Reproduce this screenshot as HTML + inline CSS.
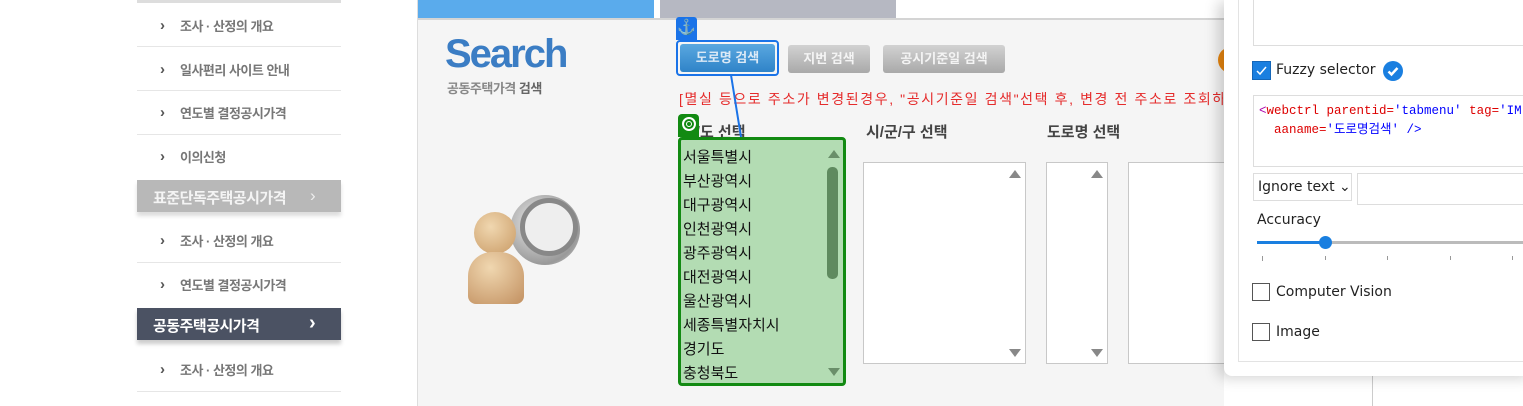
<!DOCTYPE html>
<html><head><meta charset="utf-8"><style>
*{margin:0;padding:0;box-sizing:border-box}
body{width:1523px;height:406px;overflow:hidden;background:#fff;position:relative;font-family:"Liberation Sans","Noto Sans CJK KR",sans-serif}
.a{position:absolute}
.nav{color:#777;font-size:13px;font-weight:bold;letter-spacing:-0.5px}
.sep{height:1px;background:#e6e6e6;left:137px;width:204px}
.chev{color:#555;font-size:15px;font-weight:bold;line-height:15px}
.btn{border-radius:3px;font-size:13px;font-weight:bold;text-align:center;line-height:28px;height:28px;color:#fff}
.lb{background:#fff;border:1px solid #c8c8c8}
.tri{width:0;height:0;border-left:6px solid transparent;border-right:6px solid transparent}
.up{border-bottom:8px solid #888}
.dn{border-top:8px solid #888}
.ui{font-family:"DejaVu Sans","Liberation Sans",sans-serif;font-size:14px;color:#222}
.cb{width:18px;height:18px;border:1.5px solid #555;background:#fff}
</style></head><body>
<div class="a" style="left:137px;top:0;width:204px;height:3px;background:#ddd"></div>
<div class="a chev" style="left:160px;top:18px">›</div><div class="a nav" style="left:180px;top:16px">조사 · 산정의 개요</div>
<div class="a sep" style="top:46px"></div>
<div class="a chev" style="left:160px;top:62px">›</div><div class="a nav" style="left:180px;top:60px">일사편리 사이트 안내</div>
<div class="a sep" style="top:90px"></div>
<div class="a chev" style="left:160px;top:105px">›</div><div class="a nav" style="left:180px;top:103px">연도별 결정공시가격</div>
<div class="a sep" style="top:134px"></div>
<div class="a chev" style="left:160px;top:149px">›</div><div class="a nav" style="left:180px;top:147px">이의신청</div>
<div class="a" style="left:137px;top:180px;width:204px;height:32px;background:#b8b8b8;box-shadow:0 4px 4px #ddd"></div>
<div class="a" style="left:153px;top:187px;color:#f4f4f4;font-size:15px;font-weight:bold;letter-spacing:-0.5px">표준단독주택공시가격</div>
<div class="a" style="left:310px;top:186px;color:#eee;font-size:17px">›</div>
<div class="a chev" style="left:160px;top:233px">›</div><div class="a nav" style="left:180px;top:231px">조사 · 산정의 개요</div>
<div class="a sep" style="top:262px"></div>
<div class="a chev" style="left:160px;top:277px">›</div><div class="a nav" style="left:180px;top:275px">연도별 결정공시가격</div>
<div class="a" style="left:137px;top:308px;width:204px;height:32px;background:#4b5263;box-shadow:0 4px 4px #ccc"></div>
<div class="a" style="left:153px;top:315px;color:#fff;font-size:15px;font-weight:bold;letter-spacing:-0.5px">공동주택공시가격</div>
<div class="a" style="left:309px;top:312px;color:#fff;font-size:20px;font-weight:bold">›</div>
<div class="a chev" style="left:160px;top:362px">›</div><div class="a nav" style="left:180px;top:360px">조사 · 산정의 개요</div>
<div class="a sep" style="top:391px"></div>
<div class="a" style="left:417px;top:0;width:1px;height:406px;background:#ddd"></div>
<div class="a" style="left:418px;top:0;width:236px;height:18px;background:#5aabec"></div>
<div class="a" style="left:660px;top:0;width:236px;height:18px;background:#b6b8c2"></div>
<div class="a" style="left:418px;top:18px;width:806px;height:388px;background:#f5f5f5;border-top:2px solid #d4d4d4"></div>
<div class="a" style="left:445px;top:32px;font-size:40px;font-weight:bold;color:#3b7dc4;letter-spacing:-2px">Search</div>
<div class="a" style="left:447px;top:78px;font-size:13px;color:#888;font-weight:bold;letter-spacing:-0.5px">공동주택가격 <span style="color:#666">검색</span></div>
<div class="a" style="left:510px;top:195px;width:70px;height:70px;border-radius:50%;background:radial-gradient(circle at 40% 40%,#eee,#999 70%,#ddd)"></div>
<div class="a" style="left:520px;top:198px;width:58px;height:58px;border-radius:50%;border:5px solid #888;background:#eee"></div>
<div class="a" style="left:474px;top:212px;width:42px;height:42px;border-radius:50%;background:radial-gradient(circle at 40% 35%,#f0d7b0,#c99a64)"></div>
<div class="a" style="left:468px;top:252px;width:56px;height:52px;border-radius:24px 24px 8px 8px;background:radial-gradient(circle at 40% 30%,#f0d7b0,#c29060)"></div>
<div class="a" style="left:676px;top:17px;width:21px;height:23px;background:#1a73e8;border-radius:3px 3px 0 0;color:#fff;font-size:15px;text-align:center;line-height:22px">⚓</div>
<div class="a" style="left:676px;top:40px;width:103px;height:36px;border:2px solid #1a73e8;border-radius:4px"></div>
<div class="a btn" style="left:680px;top:44px;width:95px;background:linear-gradient(#5aa8e0,#2f83c8);color:#dbe9f6">도로명 검색</div>
<div class="a btn" style="left:788px;top:45px;width:82px;background:linear-gradient(#d2d2d2,#a9a9a9);color:#f4f4f4">지번 검색</div>
<div class="a btn" style="left:883px;top:45px;width:122px;background:linear-gradient(#d2d2d2,#a9a9a9);color:#f4f4f4">공시기준일 검색</div>
<div class="a" style="left:1218px;top:47px;width:14px;height:26px;border-radius:13px 0 0 13px;background:#e8860f"></div>
<div class="a" style="left:679px;top:89px;font-size:14px;color:#e52b2b;letter-spacing:1.6px;white-space:nowrap;width:544px;overflow:hidden">[멸실 등으로 주소가 변경된경우, "공시기준일 검색"선택 후, 변경 전 주소로 조회하</div>
<div class="a" style="left:682px;top:121px;font-size:15px;font-weight:bold;color:#444">시/도 선택</div>
<div class="a" style="left:866px;top:121px;font-size:15px;font-weight:bold;color:#444">시/군/구 선택</div>
<div class="a" style="left:1047px;top:121px;font-size:15px;font-weight:bold;color:#444">도로명 선택</div>
<svg class="a" style="left:0;top:0" width="1523" height="406"><line x1="731" y1="75" x2="741" y2="137" stroke="#1a73e8" stroke-width="2"/></svg>
<div class="a" style="left:678px;top:137px;width:168px;height:249px;border:3px solid #128a12;border-radius:4px;background:#b3dcb3;overflow:hidden">
<div style="padding:6px 0 0 2px;font-size:15px;line-height:24px;color:#111">서울특별시<br>부산광역시<br>대구광역시<br>인천광역시<br>광주광역시<br>대전광역시<br>울산광역시<br>세종특별자치시<br>경기도<br>충청북도</div>
<div class="a tri" style="left:147px;top:10px;border-bottom:8px solid #6a8f6a"></div>
<div class="a" style="left:146px;top:27px;width:11px;height:112px;border-radius:5px;background:#5f8a5f"></div>
<div class="a tri" style="left:147px;top:228px;border-top:8px solid #6a8f6a"></div>
</div>
<div class="a" style="left:678px;top:114px;width:21px;height:23px;background:#128a12;border-radius:4px 4px 0 0"></div>
<div class="a" style="left:682px;top:117px;width:14px;height:14px;border-radius:50%;border:2px solid #fff"></div>
<div class="a" style="left:686px;top:121px;width:6px;height:6px;border-radius:50%;border:1.5px solid #fff"></div>
<div class="a lb" style="left:863px;top:162px;width:163px;height:202px"><div class="a tri up" style="left:145px;top:7px"></div><div class="a tri dn" style="left:145px;top:186px"></div></div>
<div class="a lb" style="left:1046px;top:162px;width:62px;height:202px"><div class="a tri up" style="left:44px;top:7px"></div><div class="a tri dn" style="left:44px;top:186px"></div></div>
<div class="a lb" style="left:1128px;top:162px;width:100px;height:202px"></div>
<div class="a" style="left:1372px;top:370px;width:1px;height:36px;background:#ccc"></div>
<div class="a" style="left:1224px;top:0;width:310px;height:376px;background:#fff;border-radius:0 0 0 8px;box-shadow:-6px 2px 14px rgba(0,0,0,0.18)"></div>
<div class="a" style="left:1238px;top:0;width:300px;height:362px;border:1px solid #e3e3e3;border-top:none"></div>
<div class="a" style="left:1253px;top:-2px;width:280px;height:48px;border:1px solid #ddd"></div>
<div class="a" style="left:1252px;top:61px;width:19px;height:19px;background:#1a7fe0;border:1px solid #1466b8"></div>
<svg class="a" style="left:1252px;top:61px" width="19" height="19"><path d="M5 10 L8 13 L14 6" stroke="#fff" stroke-width="1.5" fill="none"/></svg>
<div class="a ui" style="left:1276px;top:62px">Fuzzy selector</div>
<div class="a" style="left:1383px;top:61px;width:20px;height:20px;border-radius:50%;background:#1a7fe0"></div>
<svg class="a" style="left:1383px;top:61px" width="20" height="20"><path d="M5.5 10.5 L8.5 13.5 L14.5 7" stroke="#fff" stroke-width="2.5" fill="none"/></svg>
<div class="a" style="left:1253px;top:95px;width:280px;height:72px;border:1px solid #ddd"></div>
<div class="a" style="left:1259px;top:102px;font-family:'Liberation Mono','Noto Sans CJK KR',monospace;font-size:12.5px;line-height:19px;white-space:pre;color:#d00"><span style="color:#a0a">&lt;</span>webctrl parentid=<span style="color:#00f">'tabmenu'</span> tag=<span style="color:#00f">'IM</span>
  aaname=<span style="color:#00f">'도로명검색'</span> <span style="color:#00f">/&gt;</span></div>
<div class="a" style="left:1253px;top:173px;width:99px;height:28px;border:1px solid #ddd"></div>
<div class="a ui" style="left:1258px;top:179px">Ignore text ⌄</div>
<div class="a" style="left:1357px;top:173px;width:170px;height:32px;border:1px solid #ddd"></div>
<div class="a ui" style="left:1257px;top:212px">Accuracy</div>
<div class="a" style="left:1257px;top:241px;width:270px;height:3px;background:#bbb"></div>
<div class="a" style="left:1257px;top:241px;width:68px;height:3px;background:#1a7fe0"></div>
<div class="a" style="left:1319px;top:236px;width:13px;height:13px;border-radius:50%;background:#1a7fe0"></div>
<div class="a" style="left:1262px;top:256px;width:1px;height:5px;background:#999"></div>
<div class="a" style="left:1325px;top:256px;width:1px;height:4px;background:#999"></div>
<div class="a" style="left:1387px;top:256px;width:1px;height:4px;background:#999"></div>
<div class="a" style="left:1450px;top:256px;width:1px;height:4px;background:#999"></div>
<div class="a" style="left:1512px;top:256px;width:1px;height:4px;background:#999"></div>
<div class="a cb" style="left:1252px;top:283px"></div>
<div class="a ui" style="left:1276px;top:284px">Computer Vision</div>
<div class="a cb" style="left:1252px;top:323px"></div>
<div class="a ui" style="left:1276px;top:324px">Image</div>
</body></html>
